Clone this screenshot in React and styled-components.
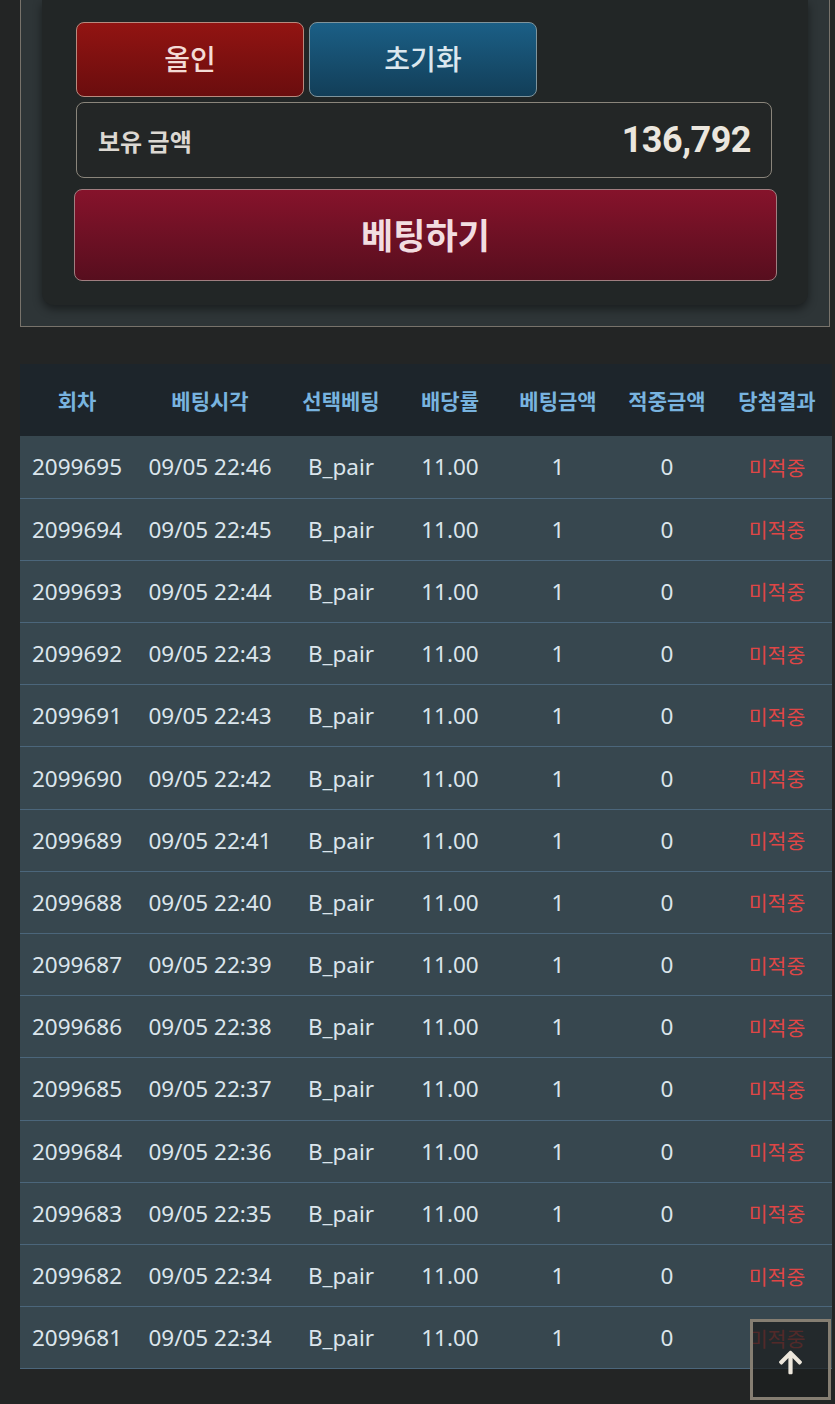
import React from "react";
import styled, { createGlobalStyle } from "styled-components";
import { FaArrowUp } from "react-icons/fa";

const Global = createGlobalStyle`
  html, body { margin: 0; padding: 0; background: #232525; }
  body { font-family: "Noto Sans", "Noto Sans CJK KR", sans-serif; }
  * { box-sizing: border-box; }
`;

const Page = styled.div`
  padding: 0 5px 40px 20px;
  width: 835px;
`;

const Panel = styled.section`
  border: 1px solid #78736b;
  border-top: none;
  background: #2e3537;
  padding: 0 21px 21px 21px;
`;

const Card = styled.div`
  background: #222626;
  border-radius: 0 0 12px 12px;
  box-shadow: 0 4px 10px rgba(0, 0, 0, 0.45);
  padding: 22px 36px 24px 34px;
  display: flex;
  flex-direction: column;
`;

const ButtonRow = styled.div`
  display: flex;
  gap: 5px;
`;

const SmallButton = styled.button`
  width: 228px;
  height: 75px;
  border-radius: 8px;
  border: 1px solid ${(p) => (p.$tone === "red" ? "#b88a7e" : "#7f949c")};
  background: ${(p) =>
    p.$tone === "red"
      ? "linear-gradient(#921412, #6a0d0e)"
      : "linear-gradient(#1b5f86, #123e58)"};
  color: ${(p) => (p.$tone === "red" ? "#f3dcd6" : "#dbe7ee")};
  font-family: "Noto Sans CJK KR", sans-serif;
  font-size: 28px;
  font-weight: 500;
  padding: 0 0 4px 0;
`;

const Balance = styled.div`
  margin-top: 5px;
  height: 76px;
  border: 1px solid #8a857b;
  border-radius: 8px;
  background: #232626;
  display: flex;
  align-items: center;
  justify-content: space-between;
  padding: 0 20px 0 21px;
`;

const BalanceLabel = styled.span`
  font-family: "Noto Sans CJK KR", sans-serif;
  font-size: 24px;
  font-weight: 700;
  color: #dcd8d2;
`;

const BalanceValue = styled.span`
  font-family: Roboto, sans-serif;
  font-size: 36px;
  font-weight: 700;
  letter-spacing: -0.5px;
  color: #ebe6de;
`;

const BetButton = styled.button`
  margin: 11px -5px 0 -2px;
  height: 92px;
  border-radius: 8px;
  border: 1px solid #a07e80;
  background: linear-gradient(#86132b, #570e1e);
  color: #f2dde0;
  font-family: "Noto Sans CJK KR", sans-serif;
  font-size: 35px;
  font-weight: 700;
  padding: 0 0 4px 0;
`;

const Table = styled.table`
  margin-top: 37px;
  width: 812px;
  border-collapse: collapse;
  table-layout: fixed;
`;

const HeadCell = styled.th`
  height: 72px;
  background: #1d252b;
  color: #78b3df;
  font-family: "Noto Sans CJK KR", sans-serif;
  font-size: 21px;
  font-weight: 700;
  text-align: center;
  padding: 0;
  width: ${(p) => p.$w}px;
`;

const Row = styled.tr`
  background: #37474f;
  border-bottom: 1px solid #4b667b;
  height: 62.2px;
`;

const Cell = styled.td`
  padding: 0;
  text-align: center;
  font-family: "Noto Sans", "Noto Sans CJK KR", sans-serif;
  font-size: 22.5px;
  color: #dbe5ec;
  white-space: nowrap;
`;

const Result = styled(Cell)`
  font-family: "Noto Sans CJK KR", sans-serif;
  font-size: 20.5px;
  color: #df4646;
`;

const TopButton = styled.button`
  position: fixed;
  right: 4px;
  bottom: 4px;
  width: 81px;
  height: 81px;
  border: 3px solid #857e72;
  background: rgba(28, 30, 30, 0.72);
  display: flex;
  align-items: center;
  justify-content: center;
  color: #ede7dc;
  padding: 5px 0 0 0;
`;

const cols = [
  ["회차", 114],
  ["베팅시각", 152],
  ["선택베팅", 110],
  ["배당률", 108],
  ["베팅금액", 108],
  ["적중금액", 110],
  ["당첨결과", 110],
];

const times = [
  "22:46", "22:45", "22:44", "22:43", "22:43", "22:42", "22:41", "22:40",
  "22:39", "22:38", "22:37", "22:36", "22:35", "22:34", "22:34",
];

const rows = times.map((t, i) => ({
  id: 2099695 - i,
  time: `09/05 ${t}`,
}));

export default function App() {
  return (
    <>
      <Global />
      <Page>
        <Panel>
          <Card>
            <ButtonRow>
              <SmallButton $tone="red">올인</SmallButton>
              <SmallButton $tone="blue">초기화</SmallButton>
            </ButtonRow>
            <Balance>
              <BalanceLabel>보유 금액</BalanceLabel>
              <BalanceValue>136,792</BalanceValue>
            </Balance>
            <BetButton>베팅하기</BetButton>
          </Card>
        </Panel>
        <Table>
          <thead>
            <tr>
              {cols.map(([c, w]) => (
                <HeadCell key={c} $w={w}>
                  {c}
                </HeadCell>
              ))}
            </tr>
          </thead>
          <tbody>
            {rows.map((r) => (
              <Row key={r.id}>
                <Cell>{r.id}</Cell>
                <Cell>{r.time}</Cell>
                <Cell>B_pair</Cell>
                <Cell>11.00</Cell>
                <Cell>1</Cell>
                <Cell>0</Cell>
                <Result>미적중</Result>
              </Row>
            ))}
          </tbody>
        </Table>
      </Page>
      <TopButton aria-label="맨 위로">
        <FaArrowUp size={27} />
      </TopButton>
    </>
  );
}
